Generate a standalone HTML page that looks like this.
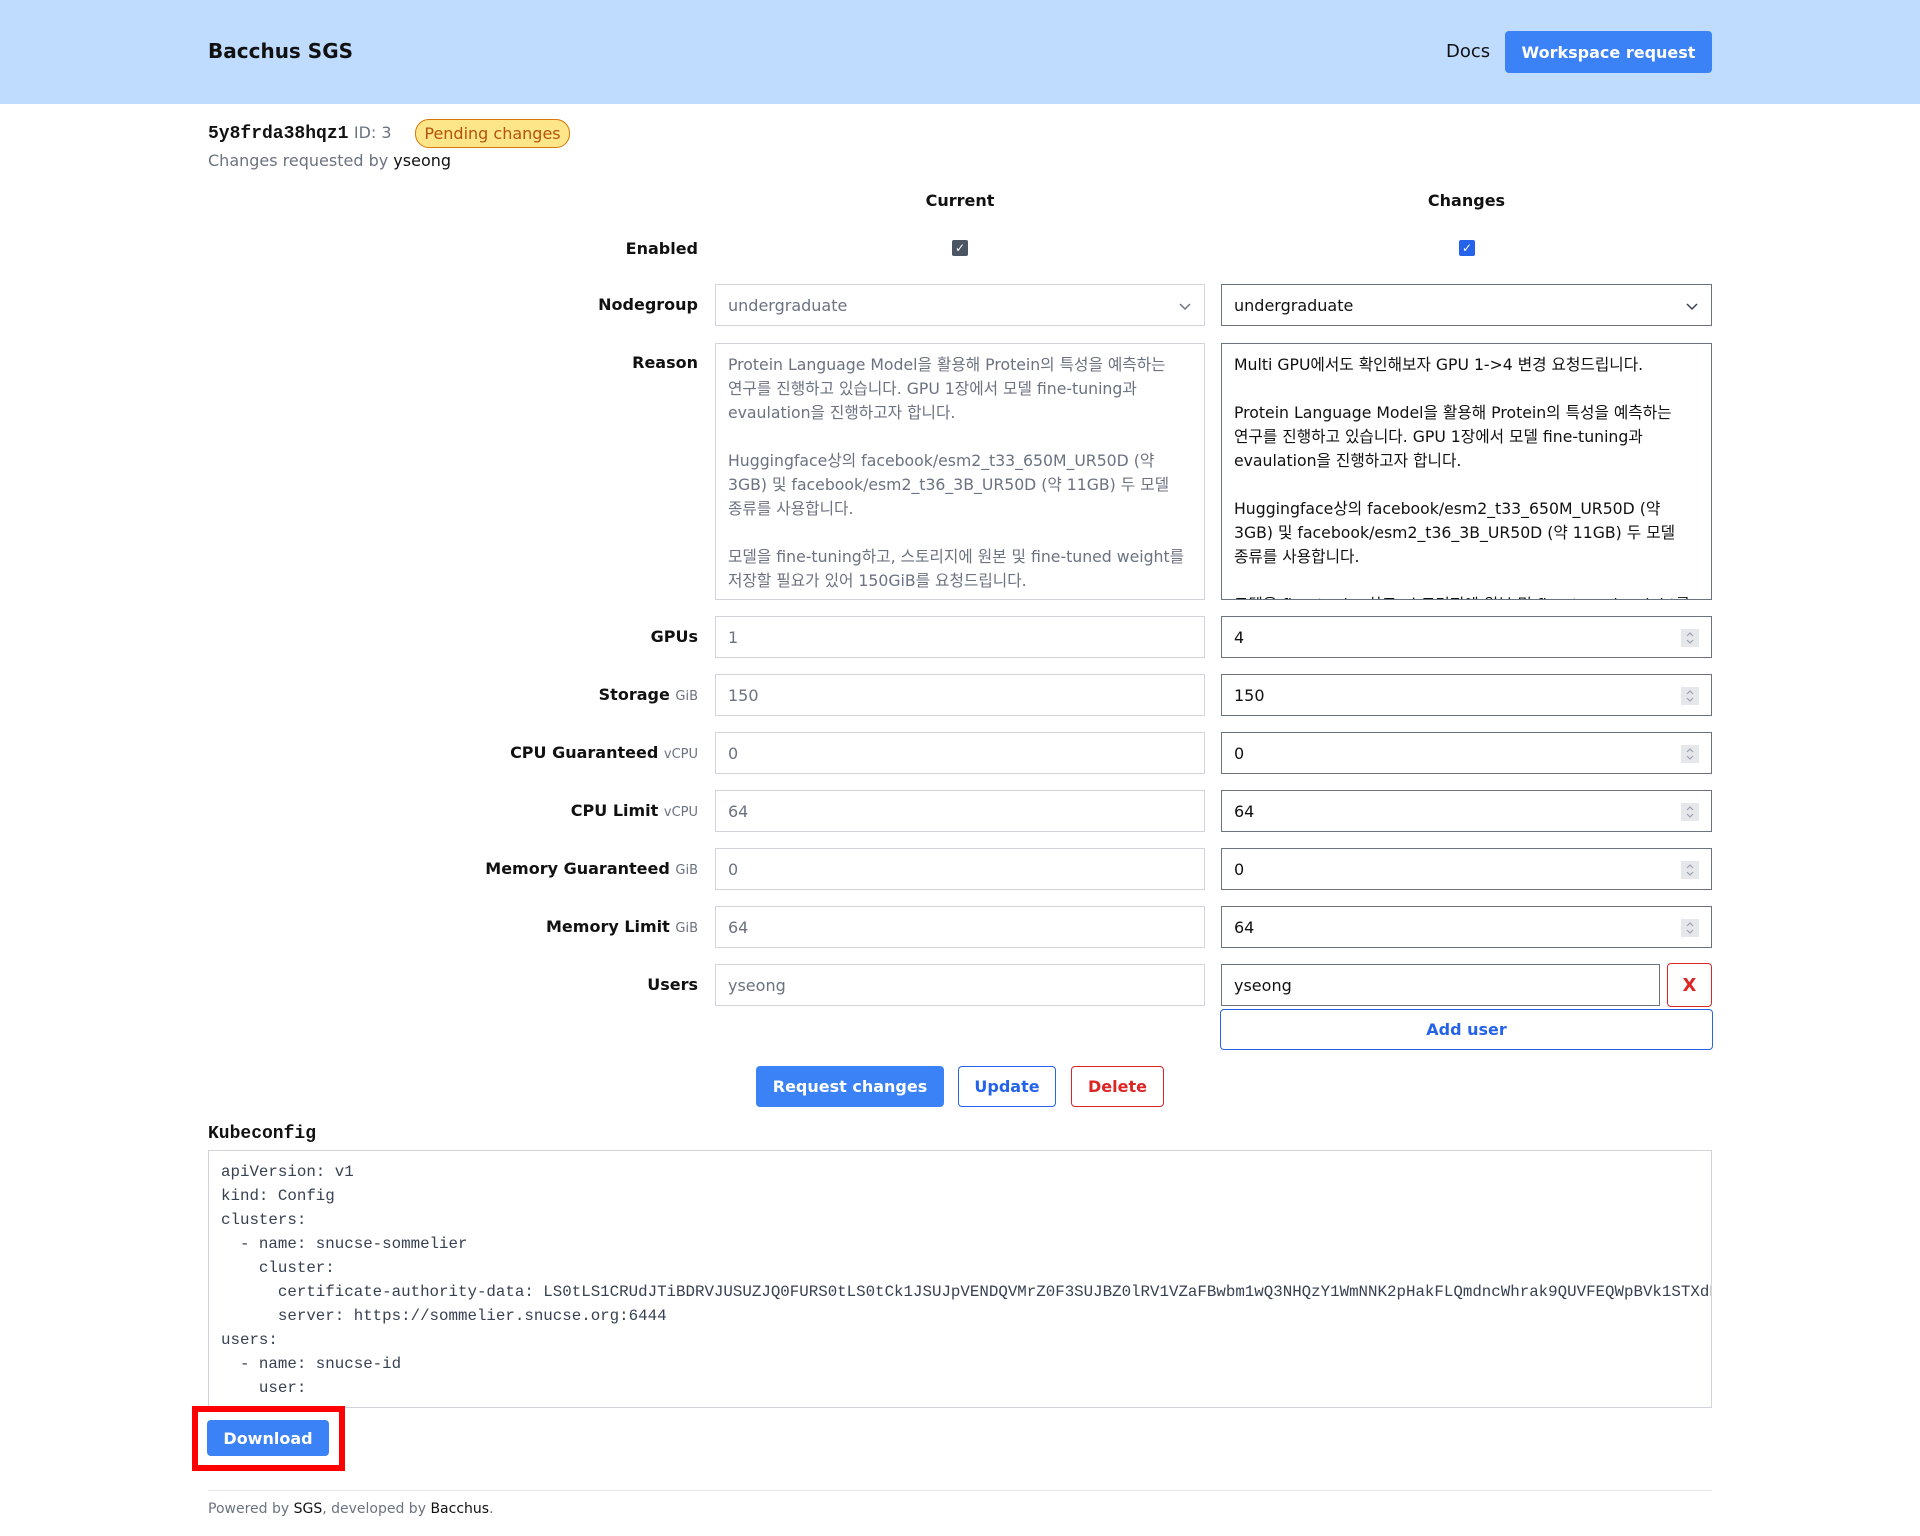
<!DOCTYPE html>
<html><head><meta charset="utf-8"><style>
*{box-sizing:border-box;margin:0;padding:0}
body{width:1920px;height:1536px;font-family:"DejaVu Sans","Liberation Sans","Noto Sans CJK KR",sans-serif;font-size:16px;color:#111;background:#fff;position:relative;overflow:hidden}
.abs{position:absolute}
header{position:absolute;left:0;top:0;width:1920px;height:104px;background:#bfdbfe}
.btn{position:absolute;display:flex;align-items:center;justify-content:center;font-weight:bold;border-radius:4px;font-size:16px}
.lbl{position:absolute;right:1222px;font-weight:bold;text-align:right;white-space:nowrap}
.lbl small{font-weight:normal;color:#6b7280;font-size:13px}
.cur{position:absolute;left:715px;width:490px;border:1px solid #d1d5db;color:#6b7280;padding-left:12px;display:flex;align-items:center}
.chg{position:absolute;left:1221px;width:491px;border:1px solid #6b7280;color:#111;padding-left:12px;display:flex;align-items:center}
.spin{position:absolute;right:12px;top:12px;width:18px;height:18px;background:#e5e7eb}
.ta{position:absolute;top:343px;height:257px;padding:9px 12px;line-height:24px;overflow:hidden;white-space:pre-wrap;word-break:keep-all;font-size:15.7px}
pre{font-family:"Liberation Mono","DejaVu Sans Mono",monospace;font-size:15.8px;line-height:24px;color:#374151}
</style></head><body>
<header>
<div class="abs" style="left:208px;top:39px;font-size:20px;font-weight:bold">Bacchus SGS</div>
<div class="abs" style="left:1446px;top:41px;font-size:18px">Docs</div>
<div class="btn" style="left:1505px;top:31px;width:207px;height:42px;background:#3b82f6;color:#fff">Workspace request</div>
</header>
<div class="abs" style="left:208px;top:123px;font-size:17px"><b style="font-family:'Liberation Mono',monospace;font-size:18px">5y8frda38hqz1</b> <span style="color:#6b7280;font-size:16px">ID: 3</span></div>
<div class="abs" style="left:415px;top:119px;width:155px;height:29px;border:1px solid #d97706;background:#fde68a;color:#b45309;border-radius:14px;font-size:16px;display:flex;align-items:center;justify-content:center">Pending changes</div>
<div class="abs" style="left:208px;top:151px;color:#6b7280">Changes requested by <span style="color:#111">yseong</span></div>

<div class="abs" style="left:715px;width:490px;top:191px;text-align:center;font-weight:bold">Current</div>
<div class="abs" style="left:1221px;width:491px;top:191px;text-align:center;font-weight:bold">Changes</div>

<div class="lbl" style="top:239px">Enabled</div>
<div class="abs" style="left:952px;top:240px;width:16px;height:16px;background:#4b5563;border-radius:2px;color:#fff;font-size:12px;text-align:center;line-height:16px">✓</div>
<div class="abs" style="left:1459px;top:240px;width:16px;height:16px;background:#2563eb;border-radius:2px;color:#fff;font-size:12px;text-align:center;line-height:16px">✓</div>

<div class="lbl" style="top:295px">Nodegroup</div>
<div class="cur" style="top:284px;height:42px">undergraduate<svg style="position:absolute;right:12px;top:14px" width="14" height="14" viewBox="0 0 14 14"><path d="M2 5l5 5 5-5" stroke="#6b7280" stroke-width="1.5" fill="none"/></svg></div>
<div class="chg" style="top:284px;height:42px">undergraduate<svg style="position:absolute;right:12px;top:14px" width="14" height="14" viewBox="0 0 14 14"><path d="M2 5l5 5 5-5" stroke="#374151" stroke-width="1.5" fill="none"/></svg></div>

<div class="lbl" style="top:353px">Reason</div>
<div class="ta" style="left:715px;width:490px;border:1px solid #d1d5db;color:#6b7280">Protein Language Model을 활용해 Protein의 특성을 예측하는 연구를 진행하고 있습니다. GPU 1장에서 모델 fine-tuning과 evaulation을 진행하고자 합니다.

Huggingface상의 facebook/esm2_t33_650M_UR50D (약 3GB) 및 facebook/esm2_t36_3B_UR50D (약 11GB) 두 모델 종류를 사용합니다.

모델을 fine-tuning하고, 스토리지에 원본 및 fine-tuned weight를 저장할 필요가 있어 150GiB를 요청드립니다.</div>
<div class="ta" style="left:1221px;width:491px;border:1px solid #6b7280;color:#111">Multi GPU에서도 확인해보자 GPU 1-&gt;4 변경 요청드립니다.

Protein Language Model을 활용해 Protein의 특성을 예측하는 연구를 진행하고 있습니다. GPU 1장에서 모델 fine-tuning과 evaulation을 진행하고자 합니다.

Huggingface상의 facebook/esm2_t33_650M_UR50D (약 3GB) 및 facebook/esm2_t36_3B_UR50D (약 11GB) 두 모델 종류를 사용합니다.

모델을 fine-tuning하고, 스토리지에 원본 및 fine-tuned weight를 저장할 필요가 있어 150GiB를 요청드립니다.</div>

<div class="lbl" style="top:627px">GPUs</div>
<div class="cur" style="top:616px;height:42px">1</div>
<div class="chg" style="top:616px;height:42px">4<svg class="spin" viewBox="0 0 18 18"><path d="M6 7l3-3 3 3M6 11l3 3 3-3" stroke="#9ca3af" stroke-width="1.2" fill="none"/></svg></div>

<div class="lbl" style="top:685px">Storage <small>GiB</small></div>
<div class="cur" style="top:674px;height:42px">150</div>
<div class="chg" style="top:674px;height:42px">150<svg class="spin" viewBox="0 0 18 18"><path d="M6 7l3-3 3 3M6 11l3 3 3-3" stroke="#9ca3af" stroke-width="1.2" fill="none"/></svg></div>

<div class="lbl" style="top:743px">CPU Guaranteed <small>vCPU</small></div>
<div class="cur" style="top:732px;height:42px">0</div>
<div class="chg" style="top:732px;height:42px">0<svg class="spin" viewBox="0 0 18 18"><path d="M6 7l3-3 3 3M6 11l3 3 3-3" stroke="#9ca3af" stroke-width="1.2" fill="none"/></svg></div>

<div class="lbl" style="top:801px">CPU Limit <small>vCPU</small></div>
<div class="cur" style="top:790px;height:42px">64</div>
<div class="chg" style="top:790px;height:42px">64<svg class="spin" viewBox="0 0 18 18"><path d="M6 7l3-3 3 3M6 11l3 3 3-3" stroke="#9ca3af" stroke-width="1.2" fill="none"/></svg></div>

<div class="lbl" style="top:859px">Memory Guaranteed <small>GiB</small></div>
<div class="cur" style="top:848px;height:42px">0</div>
<div class="chg" style="top:848px;height:42px">0<svg class="spin" viewBox="0 0 18 18"><path d="M6 7l3-3 3 3M6 11l3 3 3-3" stroke="#9ca3af" stroke-width="1.2" fill="none"/></svg></div>

<div class="lbl" style="top:917px">Memory Limit <small>GiB</small></div>
<div class="cur" style="top:906px;height:42px">64</div>
<div class="chg" style="top:906px;height:42px">64<svg class="spin" viewBox="0 0 18 18"><path d="M6 7l3-3 3 3M6 11l3 3 3-3" stroke="#9ca3af" stroke-width="1.2" fill="none"/></svg></div>

<div class="lbl" style="top:975px">Users</div>
<div class="cur" style="top:964px;height:42px">yseong</div>
<div class="chg" style="top:964px;height:42px;width:439px">yseong</div>
<div class="btn" style="left:1667px;top:963px;width:45px;height:44px;border:1px solid #dc2626;color:#dc2626;font-size:18px">X</div>
<div class="btn" style="left:1220px;top:1009px;width:493px;height:41px;border:1px solid #2563eb;color:#2563eb">Add user</div>

<div class="btn" style="left:756px;top:1066px;width:188px;height:41px;background:#3b82f6;color:#fff">Request changes</div>
<div class="btn" style="left:958px;top:1066px;width:98px;height:41px;border:1px solid #2563eb;color:#2563eb">Update</div>
<div class="btn" style="left:1071px;top:1066px;width:93px;height:41px;border:1px solid #dc2626;color:#dc2626">Delete</div>

<div class="abs" style="left:208px;top:1124px;font-family:'Liberation Mono',monospace;font-weight:bold;font-size:18px">Kubeconfig</div>
<div class="abs" style="left:208px;top:1150px;width:1504px;height:258px;border:1px solid #d1d5db;overflow:hidden;padding:9px 12px">
<pre>apiVersion: v1
kind: Config
clusters:
  - name: snucse-sommelier
    cluster:
      certificate-authority-data: LS0tLS1CRUdJTiBDRVJUSUZJQ0FURS0tLS0tCk1JSUJpVENDQVMrZ0F3SUJBZ0lRV1VZaFBwbm1wQ3NHQzY1WmNNK2pHakFLQmdncWhrak9QUVFEQWpBVk1STXdFUVlEVlFRRERBcHJkV0psY201bGRHVnpNQjRYRFRJME1ERXhNakE1TlRFMU1Wb1hEVE0wTURFd09UQTVOVEUxTVZvd0ZURVRNQkVHQTFVRUF3d0thM1ZpWlhKdVpYUmxjekJaTUJNR0J5cUdTTTQ5QWdFR0NDcUdTTTQ5QXdFSEEwSUFCTkF
      server: https://sommelier.snucse.org:6444
users:
  - name: snucse-id
    user:</pre>
</div>
<div class="abs" style="left:192px;top:1406px;width:153px;height:65px;border:6px solid #ff0000"></div>
<div class="btn" style="left:207px;top:1420px;width:122px;height:36px;background:#3b82f6;color:#fff">Download</div>
<div class="abs" style="left:208px;top:1490px;width:1504px;height:1px;background:#e5e7eb"></div>
<div class="abs" style="left:208px;top:1501px;font-size:14px;color:#6b7280">Powered by <span style="color:#111">SGS</span>, developed by <span style="color:#111">Bacchus</span>.</div>
</body></html>
